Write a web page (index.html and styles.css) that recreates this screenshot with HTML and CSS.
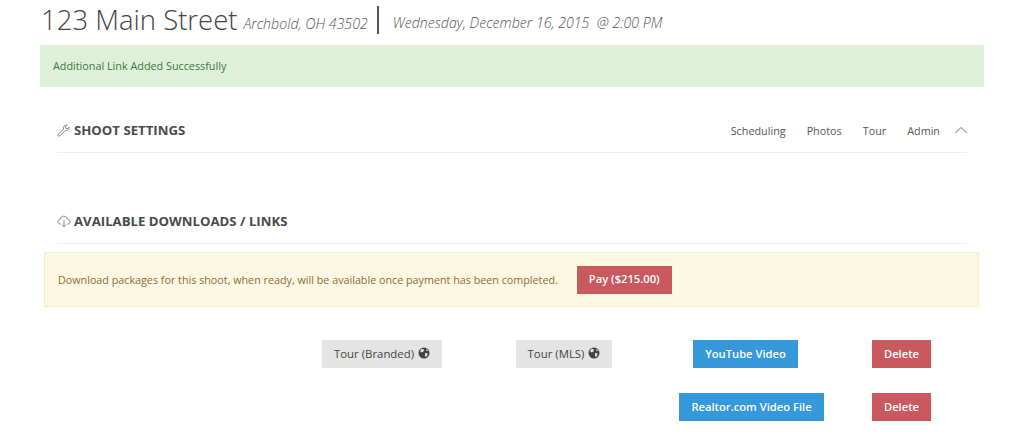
FILE: index.html
```html
<!DOCTYPE html>
<html lang="en">
<head>
    <meta charset="UTF-8">
    <meta name="viewport" content="width=device-width, initial-scale=1.0">
    <title>123 Main Street</title>
    <link rel="stylesheet" href="styles.css">
</head>
<body>

<div class="page">
    <div class="shoot-header">
        <h1>123 Main Street</h1>
        <span class="address">Archbold, OH 43502</span>
        <span class="date">Wednesday, December 16, 2015 &nbsp;@ 2:00 PM</span>
    </div>

    <div class="alert-success">Additional Link Added Successfully</div>

    <div class="section settings-section">
        <h2>
            <svg class="section-icon" viewBox="0 0 16 16" width="14" height="14" fill="none" stroke="#777" stroke-width="1">
                <path d="M1.2 13.1 7.4 6.9C6.8 4.6 8.6 2 11.5 2.3L9.6 4.3 10 6.2 11.9 6.6 13.8 4.7C14.1 7.6 11.5 9.4 9.2 8.8L3 15C2 15.6.6 14.2 1.2 13.1Z"/>
            </svg>
            SHOOT SETTINGS
        </h2>
        <nav class="section-nav">
            <a>Scheduling</a>
            <a>Photos</a>
            <a>Tour</a>
            <a>Admin</a>
            <svg class="chevron" viewBox="0 0 14 8" width="14" height="8" fill="none" stroke="#aaa" stroke-width="1.2">
                <path d="M1 7 7 1.5 13 7"/>
            </svg>
        </nav>
    </div>

    <div class="section downloads-section">
        <h2>
            <svg class="section-icon" viewBox="0 0 16 16" width="14" height="14" fill="none" stroke="#777" stroke-width="1">
                <path d="M4.5 11.5H4C2 11.5 1 10 1 8.6 1 7 2.2 5.9 3.6 5.8 4 3.6 5.800 2.500 7.800 2.500 10.200 2.500 11.800 4.200 12 6 13.800 6.200 15 7.300 15 8.900 15 10.400 13.800 11.500 12.300 11.500H11.500"/>
                <path d="M8 7V14.500M5.800 12.300 8 14.500 10.200 12.300"/>
            </svg>
            AVAILABLE DOWNLOADS / LINKS
        </h2>
    </div>

    <div class="alert-warning">
        <span>Download packages for this shoot, when ready, will be available once payment has been completed.</span>
        <a class="btn btn-red pay-btn">Pay ($215.00)</a>
    </div>

    <div class="link-grid">
        <div></div>
        <div class="cell"><a class="btn btn-grey">Tour (Branded) <svg class="globe" viewBox="0 0 12 12" width="12" height="12"><circle cx="6" cy="6" r="5.500" fill="#444"/><path d="M3.500 1.800 6 2.500 5.500 4.500 3.500 5.500 2 4ZM7 6 9.800 6.500 8.500 9.800 7 9.500ZM8.500 1.800 10.500 4 8.500 4Z" fill="#e4e4e4"/></svg></a></div>
        <div class="cell"><a class="btn btn-grey">Tour (MLS) <svg class="globe" viewBox="0 0 12 12" width="12" height="12"><circle cx="6" cy="6" r="5.500" fill="#444"/><path d="M3.500 1.800 6 2.500 5.500 4.500 3.500 5.500 2 4ZM7 6 9.800 6.500 8.500 9.800 7 9.500ZM8.500 1.800 10.500 4 8.500 4Z" fill="#e4e4e4"/></svg></a></div>
        <div class="cell"><a class="btn btn-blue">YouTube Video</a></div>
        <div class="cell"><a class="btn btn-red">Delete</a></div>

        <div></div>
        <div></div>
        <div></div>
        <div class="cell cell-wide"><a class="btn btn-blue">Realtor.com Video File</a></div>
        <div class="cell"><a class="btn btn-red">Delete</a></div>
    </div>
</div>

</body>
</html>
```

FILE: styles.css
```css
/* Base Styles */
html, body {
    height: 100%;
}

body {
    margin: 0;
    background-color: #fff;
    color: #555;
    font-family: "Open Sans", "Liberation Sans", sans-serif;
    overflow: hidden;
}

.page {
    padding: 0 40px;
}

/* Header */
.shoot-header {
    display: flex;
    align-items: center;
    height: 45px;
    padding-bottom: 7px;
    padding-left: 1px;
    box-sizing: border-box;
    color: #555;
    font-style: italic;
    font-size: 14.2px;
    font-weight: 300;
}

.shoot-header h1 {
    margin: 0;
    font-size: 27.5px;
    font-weight: 300;
    font-style: normal;
    color: #444;
}

.address {
    margin-left: 6px;
    margin-top: 9px;
}

.date {
    margin-left: 9px;
    margin-top: 2px;
    padding-top: 6px;
    padding-left: 14px;
    border-left: 2px solid #5a5350;
    line-height: 22px;
}

/* Alerts */
.alert-success {
    height: 42px;
    line-height: 42px;
    padding-left: 13px;
    background-color: #dff0d8;
    color: #3c763d;
    font-size: 10.8px;
}

.alert-warning {
    display: flex;
    align-items: center;
    gap: 19px;
    height: 55px;
    margin: 0 5px 0 4px;
    padding-left: 13px;
    box-sizing: border-box;
    background-color: #fcf8e3;
    border: 1px solid #faebcc;
    color: #8a6d3b;
    font-size: 10.76px;
}

/* Sections */
.section {
    display: flex;
    justify-content: space-between;
    align-items: center;
    margin: 0 17px;
    border-bottom: 1px solid #eee;
    box-sizing: border-box;
}

.settings-section {
    height: 66px;
    padding-top: 20px;
}

.downloads-section {
    height: 44px;
    margin-top: 47px;
    margin-bottom: 8px;
    padding-bottom: 2px;
}

.section h2 {
    display: flex;
    align-items: center;
    margin: 0;
    font-size: 13.2px;
    font-weight: 700;
    color: #4a4a4a;
}

.section-icon {
    margin-right: 3px;
}

.section-nav {
    display: flex;
    align-items: center;
    padding-top: 1px;
    font-size: 10.8px;
    color: #555;
}

.section-nav a {
    margin-left: 21px;
}

.chevron {
    margin-left: 14px;
    margin-right: -1px;
}

/* Buttons */
.btn {
    display: inline-flex;
    align-items: center;
    justify-content: center;
    height: 28px;
    padding: 0 12px 2px;
    box-sizing: border-box;
    font-size: 11.2px;
    white-space: pre;
}

.btn-red {
    background-color: #c9585f;
    color: #fff;
    font-weight: 600;
}

.btn-blue {
    background-color: #3498db;
    color: #fff;
    font-weight: 600;
}

.btn-grey {
    background-color: #e4e4e4;
    color: #444;
    font-size: 11.4px;
}

.globe {
    margin-left: 1px;
}

/* Links */
.link-grid {
    display: grid;
    grid-template-columns: 234px 182px 182px 181px 131px;
    row-gap: 25px;
    margin: 33px 17px 0;
}

.cell {
    display: flex;
    justify-content: center;
}

.cell-wide {
    margin-left: 12px;
}
```
